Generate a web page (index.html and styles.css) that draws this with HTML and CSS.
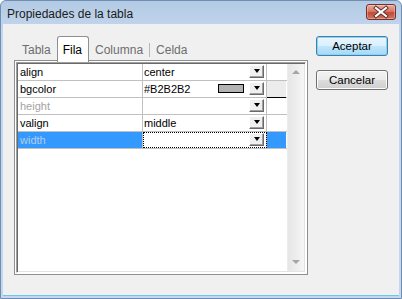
FILE: index.html
```html
<!DOCTYPE html>
<html lang="es">
<head>
    <meta charset="UTF-8">
    <title>Propiedades de la tabla</title>
    <link rel="stylesheet" href="styles.css">
</head>
<body>
    <div class="window">
        <div class="titlebar">
            <span class="title">Propiedades de la tabla</span>
            <div class="close">
                <svg width="28" height="14" viewBox="0 0 28 14">
                    <path d="M9 3 L19 11 M19 3 L9 11" stroke="#5a2a24" stroke-width="4" stroke-linecap="square"/>
                    <path d="M9 3 L19 11 M19 3 L9 11" stroke="#fff" stroke-width="2.2" stroke-linecap="square"/>
                </svg>
            </div>
        </div>

        <div class="client">
            <div class="left">
                <div class="tabs">
                    <div class="tab">Tabla</div>
                    <div class="tab active">Fila</div>
                    <div class="tab">Columna</div>
                    <div class="tab sep">Celda</div>
                </div>

                <div class="panel">
                    <div class="grid">
                        <div class="rows">
                            <div class="row">
                                <div class="cell name">align</div>
                                <div class="cell value"><span class="text">center</span><span class="drop"></span></div>
                                <div class="cell extra"></div>
                            </div>
                            <div class="row">
                                <div class="cell name">bgcolor</div>
                                <div class="cell value"><span class="text">#B2B2B2</span><span class="swatch"></span><span class="drop"></span></div>
                                <div class="cell extra picked"></div>
                            </div>
                            <div class="row">
                                <div class="cell name disabled">height</div>
                                <div class="cell value"><span class="text"></span><span class="drop"></span></div>
                                <div class="cell extra"></div>
                            </div>
                            <div class="row">
                                <div class="cell name">valign</div>
                                <div class="cell value"><span class="text">middle</span><span class="drop"></span></div>
                                <div class="cell extra"></div>
                            </div>
                            <div class="row selected">
                                <div class="cell name">width</div>
                                <div class="cell value"><span class="text"></span><span class="drop"></span></div>
                                <div class="cell extra"></div>
                            </div>
                        </div>
                        <div class="scroll">
                            <span class="arrow up"></span>
                            <span class="arrow down"></span>
                        </div>
                    </div>
                </div>
            </div>

            <div class="side">
                <button class="btn default">Aceptar</button>
                <button class="btn">Cancelar</button>
            </div>
        </div>
    </div>
</body>
</html>
```

FILE: styles.css
```css
body {
    margin: 0;
    font-family: 'Liberation Sans', Arial, sans-serif;
}

.window {
    width: 402px;
    height: 299px;
    box-sizing: border-box;
    background: linear-gradient(#b3cae4, #c3d7ee 30px, #c3d7ee);
    border: 1px solid #6f8eb2;
    border-radius: 6px 6px 0 0;
    display: flex;
    flex-direction: column;
}

.titlebar {
    height: 23px;
    display: flex;
    justify-content: space-between;
    align-items: flex-start;
    padding: 0 5px 0 6px;
}

.title {
    font-size: 12px;
    color: #1b1b1b;
    line-height: 26px;
}

.close {
    margin-top: 3px;
    width: 28px;
    height: 14px;
    border: 1px solid #7a2e24;
    border-radius: 3px;
    background: linear-gradient(#e9aa9c, #d67a6a 45%, #c24a37 55%, #d27563);
    box-shadow: inset 0 0 0 1px rgba(255,255,255,0.3);
}

.close svg {
    display: block;
}

.client {
    flex: 1;
    margin: 0 2px 2px 2px;
    background-color: #f0f0f0;
    border-bottom: 1px solid #6ec6ee;
    display: flex;
    gap: 8px;
    padding: 12px 0 0 11px;
}

.left {
    width: 294px;
}

.tabs {
    display: flex;
    height: 25px;
    padding-left: 2px;
    position: relative;
    z-index: 1;
}

.tab {
    padding: 0 6px;
    font-size: 12px;
    line-height: 28px;
    color: #6d6d6d;
    height: 25px;
}

.tab.active {
    color: #000;
    background-color: #fff;
    border: 1px solid #8e8f8f;
    border-bottom: none;
    border-radius: 3px 3px 0 0;
    padding: 0 6px 0 5px;
    line-height: 27px;
    height: 25px;
}

.tab.sep {
    height: auto;
    margin-top: 7px;
    margin-bottom: 4px;
    line-height: 14px;
    border-left: 1px solid #b8b8b8;
}

.panel {
    height: 215px;
    box-sizing: border-box;
    border: 1px solid #8e8f8f;
    background-color: #fff;
    padding: 1px;
    margin-top: -1px;
}

.grid {
    height: 100%;
    box-sizing: border-box;
    border: 1px solid;
    border-color: #a0a0a0 #fff #fff #a0a0a0;
    box-shadow: inset 1px 1px #696969, inset -1px -1px #e3e3e3;
    padding: 1px;
    display: flex;
    background-color: #fff;
}

.rows {
    flex: 1;
}

.row {
    display: grid;
    grid-template-columns: 125px 124px 19px;
    height: 17px;
    border-bottom: 1px solid #c0c0c0;
    box-sizing: border-box;
    font-size: 11px;
}

.cell {
    line-height: 16px;
    white-space: nowrap;
}

.name {
    border-right: 1px solid #c0c0c0;
    padding-left: 2px;
}

.name.disabled {
    color: #a3a3a3;
}

.value {
    border-right: 1px solid #c0c0c0;
    display: flex;
    align-items: flex-start;
    padding-left: 1px;
}

.value .text {
    flex: 1;
}

.swatch {
    width: 24px;
    height: 7px;
    margin: 3px 5px 0 0;
    background-color: #b2b2b2;
    border: 1px solid #000;
}

.drop {
    width: 15px;
    height: 13px;
    margin: 1px 2px 0 0;
    box-sizing: border-box;
    background-color: #f0f0f0;
    border: 1px solid;
    border-color: #fff #696969 #696969 #fff;
    box-shadow: inset -1px -1px #a0a0a0;
    display: flex;
    align-items: center;
    justify-content: center;
}

.drop::after {
    content: "";
    border-left: 3.5px solid transparent;
    border-right: 3.5px solid transparent;
    border-top: 4px solid #000;
    margin-bottom: 1px;
}

.extra.picked {
    background-color: #ececec;
    border-bottom: 1px solid #000;
    margin-bottom: -1px;
}

.row.selected .name {
    background-color: #3399ff;
    color: #b3cdea;
}

.row.selected .value {
    outline: 1px dotted #000;
    outline-offset: -1px;
}

.row.selected .extra {
    background-color: #3399ff;
}

.scroll {
    width: 17px;
    background: linear-gradient(90deg, #e6e6e6, #efefef 60%, #f6f6f6);
    border-left: 1px solid #ececec;
    box-sizing: border-box;
    display: flex;
    flex-direction: column;
    justify-content: space-between;
    align-items: center;
    padding: 6px 0 7px;
}

.arrow {
    width: 0;
    height: 0;
    border-left: 4px solid transparent;
    border-right: 4px solid transparent;
}

.arrow.up {
    border-bottom: 4px solid #a5a5a5;
}

.arrow.down {
    border-top: 4px solid #a5a5a5;
}

.side {
    display: flex;
    flex-direction: column;
    gap: 14px;
}

.btn {
    width: 72px;
    height: 20px;
    font-family: 'Liberation Sans', Arial, sans-serif;
    font-size: 11.5px;
    color: #000;
    border: 1px solid #707070;
    border-radius: 3px;
    background: linear-gradient(#f2f2f2, #ebebeb 50%, #dddddd 51%, #cfcfcf);
    box-shadow: inset 0 0 0 1px #fcfcfc;
    padding: 0;
}

.btn.default {
    border-color: #3c7fb1;
    box-shadow: inset 0 0 0 1px #8ed1f0;
    background: linear-gradient(#eaf6fd, #d9f0fc 50%, #bee6fd 51%, #a7d9f5);
}
```
